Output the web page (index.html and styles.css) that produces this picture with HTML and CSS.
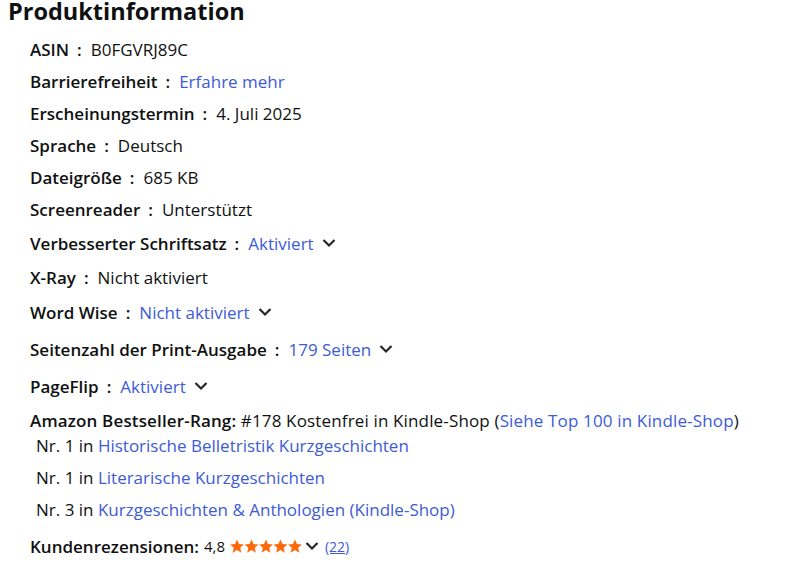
FILE: index.html
```html
<!DOCTYPE html>
<html lang="de">
<head>
<meta charset="utf-8">
<title>Produktinformation</title>
<link rel="stylesheet" href="styles.css">
</head>
<body>
<h2 class="title">Produktinformation</h2>
<ul class="details">
  <li class="row"><span class="label">ASIN</span><span class="sep">:</span><span>B0FGVRJ89C</span></li>
  <li class="row"><span class="label">Barrierefreiheit</span><span class="sep">:</span><a class="link" href="#">Erfahre mehr</a></li>
  <li class="row"><span class="label">Erscheinungstermin</span><span class="sep">:</span><span>4. Juli 2025</span></li>
  <li class="row"><span class="label">Sprache</span><span class="sep">:</span><span>Deutsch</span></li>
  <li class="row"><span class="label">Dateigröße</span><span class="sep">:</span><span>685 KB</span></li>
  <li class="row"><span class="label">Screenreader</span><span class="sep">:</span><span>Unterstützt</span></li>
  <li class="row h36"><span class="label">Verbesserter Schriftsatz</span><span class="sep">:</span><a class="link" href="#">Aktiviert</a><svg class="chev" viewBox="0 0 16 16"><path d="M2.5 5l5.5 5.5 5.5-5.5" /></svg></li>
  <li class="row"><span class="label">X-Ray</span><span class="sep">:</span><span>Nicht aktiviert</span></li>
  <li class="row h38"><span class="label">Word Wise</span><span class="sep">:</span><a class="link" href="#">Nicht aktiviert</a><svg class="chev" viewBox="0 0 16 16"><path d="M2.5 5l5.5 5.5 5.5-5.5" /></svg></li>
  <li class="row h36"><span class="label">Seitenzahl der Print-Ausgabe</span><span class="sep">:</span><a class="link" href="#">179 Seiten</a><svg class="chev" viewBox="0 0 16 16"><path d="M2.5 5l5.5 5.5 5.5-5.5" /></svg></li>
  <li class="row h38"><span class="label">PageFlip</span><span class="sep">:</span><a class="link" href="#">Aktiviert</a><svg class="chev" viewBox="0 0 16 16"><path d="M2.5 5l5.5 5.5 5.5-5.5" /></svg></li>
  <li class="rank">
    <div class="rank-line"><span class="label">Amazon Bestseller-Rang:</span> #178 Kostenfrei in Kindle-Shop (<a class="link" href="#">Siehe Top 100 in Kindle-Shop</a>)</div>
    <ul class="subranks">
      <li>Nr. 1 in <a class="link" href="#">Historische Belletristik Kurzgeschichten</a></li>
      <li>Nr. 1 in <a class="link" href="#">Literarische Kurzgeschichten</a></li>
      <li>Nr. 3 in <a class="link" href="#">Kurzgeschichten &amp; Anthologien (Kindle-Shop)</a></li>
    </ul>
  </li>
  <li class="reviews"><span class="label">Kundenrezensionen:</span><span class="rating">4,8</span><svg class="stars" viewBox="0 0 72 15"><g fill="#fe6a0a"><path id="s" d="M7 0.5l2 4.6 4.9 0.4-3.7 3.3 1.1 4.9L7 11.1 2.7 13.7l1.1-4.9L0.1 5.5l4.9-0.4z"/><use href="#s" x="14.5"/><use href="#s" x="29"/><use href="#s" x="43.5"/><use href="#s" x="58"/></g></svg><svg class="chev chev-small" viewBox="0 0 16 16"><path d="M2.5 5l5.5 5.5 5.5-5.5" /></svg><a class="count" href="#">(22)</a></li>
</ul>
</body>
</html>
```
FILE: styles.css
```css
body {
  margin: 0;
  padding: 0 8px;
  font-family: "Open Sans", "Liberation Sans", sans-serif;
  font-size: 17px;
  color: #0f1111;
  background: #fff;
}
.title {
  margin: 0;
  font-size: 23.5px;
  font-weight: 700;
  line-height: 22px;
}
.details {
  list-style: none;
  margin: 11px 0 0 0;
  padding: 0 0 0 22px;
}
.row {
  display: flex;
  align-items: center;
  height: 32px;
}
.h36 { height: 36px; }
.h38 { height: 38px; }
.label { font-weight: 600; }
.sep { font-weight: 600; margin: 0 9px 0 8px; }
.link { color: #3d5bd6; text-decoration: none; }
.chev {
  width: 16px;
  height: 16px;
  margin-left: 7px;
  fill: none;
  stroke: #262626;
  stroke-width: 2.2;
}
.rank { margin-top: 4px; }
.rank-line { line-height: 24px; letter-spacing: 0.15px; }
.subranks { list-style: none; margin: 0; padding: 0 0 0 6px; }
.subranks li { line-height: 24px; margin-top: 8px; }
.subranks li:first-child { margin-top: 1px; }
.reviews {
  display: flex;
  align-items: center;
  height: 24px;
  margin-top: 12px;
}
.rating { margin-left: 5px; font-size: 15px; }
.stars { width: 72px; height: 15px; margin-left: 5px; }
.chev-small { margin-left: 2px; }
.count { color: #3d5bd6; font-size: 14px; margin-left: 5px; text-decoration: underline; }
```
